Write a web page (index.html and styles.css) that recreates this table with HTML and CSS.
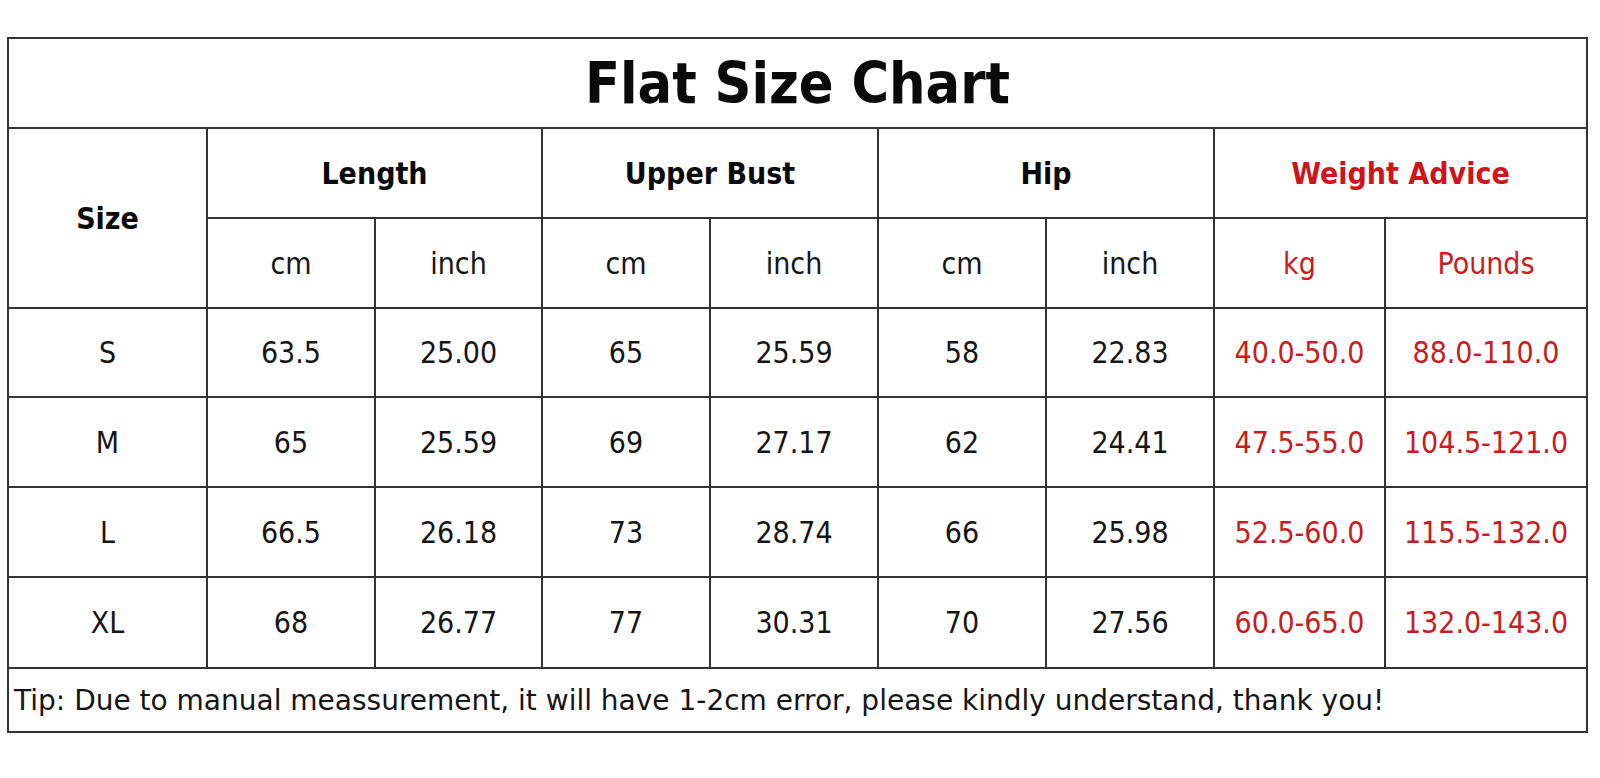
FILE: index.html
```html
<!DOCTYPE html>
<html lang="en">
<head>
<meta charset="utf-8">
<title>Flat Size Chart</title>
<link rel="stylesheet" href="styles.css">
</head>
<body>
<div class="chart">
  <div class="cell title">Flat Size Chart</div>

  <div class="cell head size">Size</div>
  <div class="cell head span2">Length</div>
  <div class="cell head span2">Upper Bust</div>
  <div class="cell head span2">Hip</div>
  <div class="cell head span2 red">Weight Advice</div>

  <div class="cell">cm</div>
  <div class="cell">inch</div>
  <div class="cell">cm</div>
  <div class="cell">inch</div>
  <div class="cell">cm</div>
  <div class="cell">inch</div>
  <div class="cell red">kg</div>
  <div class="cell red">Pounds</div>

  <div class="cell">S</div>
  <div class="cell">63.5</div>
  <div class="cell">25.00</div>
  <div class="cell">65</div>
  <div class="cell">25.59</div>
  <div class="cell">58</div>
  <div class="cell">22.83</div>
  <div class="cell red">40.0-50.0</div>
  <div class="cell red">88.0-110.0</div>

  <div class="cell">M</div>
  <div class="cell">65</div>
  <div class="cell">25.59</div>
  <div class="cell">69</div>
  <div class="cell">27.17</div>
  <div class="cell">62</div>
  <div class="cell">24.41</div>
  <div class="cell red">47.5-55.0</div>
  <div class="cell red">104.5-121.0</div>

  <div class="cell">L</div>
  <div class="cell">66.5</div>
  <div class="cell">26.18</div>
  <div class="cell">73</div>
  <div class="cell">28.74</div>
  <div class="cell">66</div>
  <div class="cell">25.98</div>
  <div class="cell red">52.5-60.0</div>
  <div class="cell red">115.5-132.0</div>

  <div class="cell">XL</div>
  <div class="cell">68</div>
  <div class="cell">26.77</div>
  <div class="cell">77</div>
  <div class="cell">30.31</div>
  <div class="cell">70</div>
  <div class="cell">27.56</div>
  <div class="cell red">60.0-65.0</div>
  <div class="cell red">132.0-143.0</div>

  <div class="cell tip">Tip: Due to manual meassurement, it will have 1-2cm error, please kindly understand, thank you!</div>
</div>
</body>
</html>
```
FILE: styles.css
```css
html, body {
  margin: 0;
  padding: 0;
  background: #ffffff;
}

body {
  font-family: "DejaVu Sans Condensed", "DejaVu Sans", sans-serif;
  color: #151515;
}

.chart {
  display: grid;
  grid-template-columns: 197px 166px 165px 166px 166px 166px 166px 169px 200px;
  grid-template-rows: 88px 88px 88px 87px 88px 88px 89px 62px;
  gap: 2px;
  padding: 2px;
  background: #333333;
  width: max-content;
  margin: 37px 0 0 7px;
}

.cell {
  background: #ffffff;
  display: flex;
  align-items: center;
  justify-content: center;
  font-size: 30px;
  white-space: nowrap;
}

.title {
  grid-column: 1 / -1;
  font-weight: bold;
  font-size: 57px;
  color: #0a0a0a;
}

.head {
  font-weight: bold;
  font-size: 30px;
  color: #0a0a0a;
}

.size {
  grid-row: span 2;
}

.span2 {
  grid-column: span 2;
}

.red {
  color: #c81c22;
}

.head.red {
  color: #d0141c;
}

.tip {
  grid-column: 1 / -1;
  justify-content: flex-start;
  padding-left: 5px;
  font-family: "DejaVu Sans", sans-serif;
  font-size: 28px;
}
```
